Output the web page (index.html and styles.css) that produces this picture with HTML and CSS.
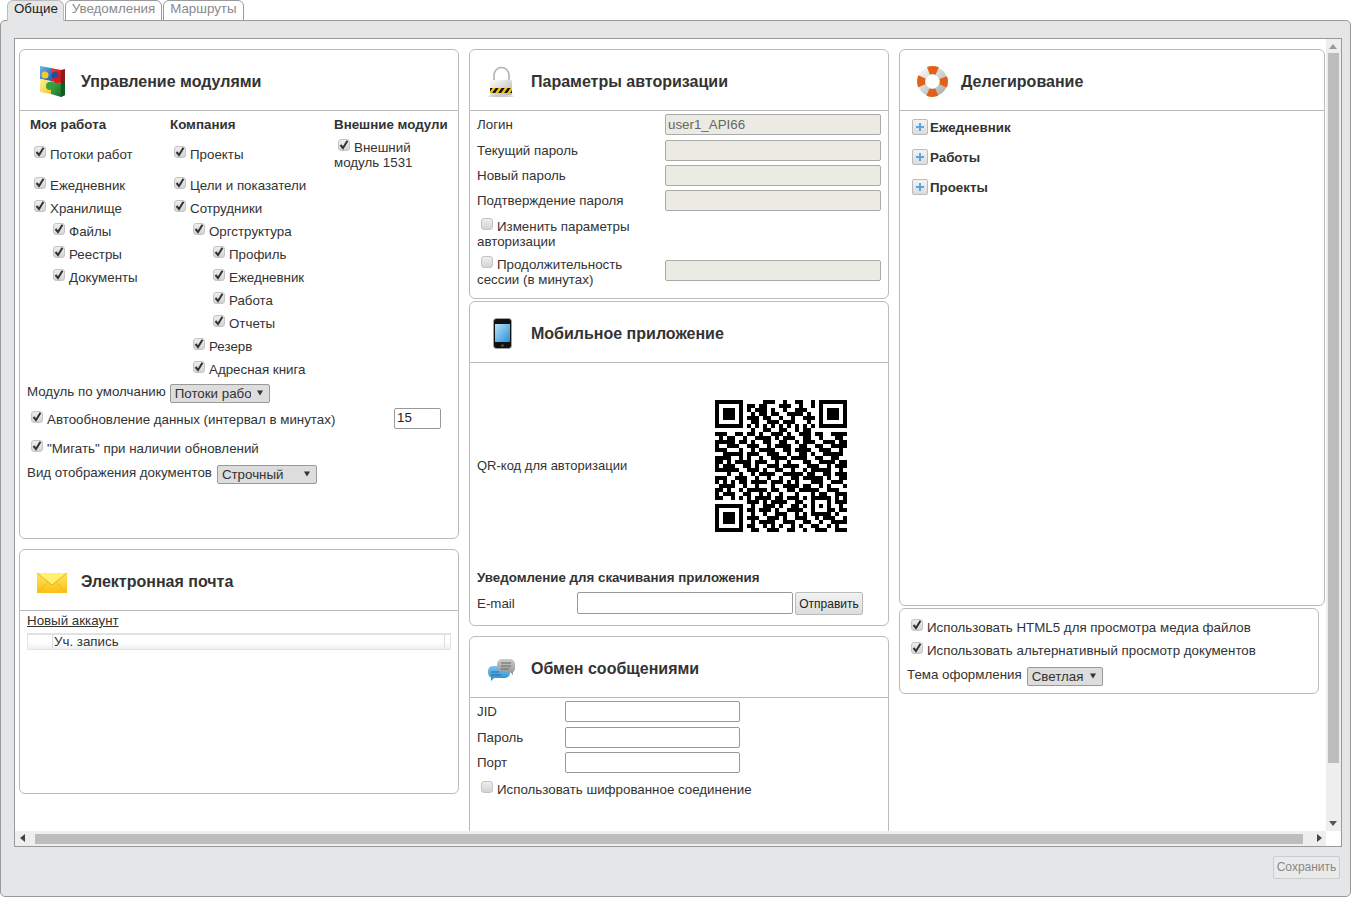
FILE: index.html
```html
<!DOCTYPE html>
<html lang="ru">
<head>
<meta charset="utf-8">
<title>Настройки</title>
<link rel="stylesheet" href="styles.css">
</head>
<body>
<div class="page">
  <nav class="tabs">
    <div class="tab active">Общие</div>
    <div class="tab">Уведомления</div>
    <div class="tab">Маршруты</div>
  </nav>
  <main class="panel">
    <div class="scrollbox">
      <div class="viewport">
        <div class="columns">
          <div class="col col-a">
            <section class="card card-modules">
              <header class="card-head">
                <svg class="ico" viewBox="0 0 32 32"><defs>
                  <linearGradient id="pb" x1="0" y1="0" x2="1" y2="1"><stop offset="0" stop-color="#6fb7e8"/><stop offset="1" stop-color="#1f5fb0"/></linearGradient>
                  <linearGradient id="py" x1="0" y1="0" x2="1" y2="1"><stop offset="0" stop-color="#fff3a0"/><stop offset="1" stop-color="#f0c52a"/></linearGradient>
                  <linearGradient id="pg" x1="0" y1="0" x2="1" y2="1"><stop offset="0" stop-color="#4cae4c"/><stop offset="1" stop-color="#17702a"/></linearGradient>
                  <linearGradient id="pr" x1="0" y1="0" x2="1" y2="1"><stop offset="0" stop-color="#f03a3a"/><stop offset="1" stop-color="#c40d12"/></linearGradient></defs>
                  <path d="M3 0 14 2V15L3 13Z" fill="url(#pb)"/><path d="M14 2 24 4V17L14 15Z" fill="url(#pr)"/><path d="M3 13 14 15V28L3 26Z" fill="url(#py)"/><path d="M14 15 24 17V31L14 28Z" fill="url(#pg)"/>
                  <path d="M24 4 28 3V29L24 31Z" fill="#8c1a1a"/><path d="M24 17 28 16V29L24 31Z" fill="#0f5a20"/>
                  <circle cx="8" cy="9" r="3.5" fill="#f6c92e"/><circle cx="18" cy="9.5" r="3.5" fill="#1d4fa5"/><circle cx="13" cy="20" r="4" fill="#37a03e"/><circle cx="20" cy="14" r="3" fill="#e3161b"/>
                </svg>
                <h2>Управление модулями</h2>
              </header>
              <div class="modules">
                <div class="mod-col">
                  <div class="mod-head">Моя работа</div>
                  <label class="row lead l0"><input type="checkbox" checked>Потоки работ</label>
                  <label class="row l0"><input type="checkbox" checked>Ежедневник</label>
                  <label class="row l0"><input type="checkbox" checked>Хранилище</label>
                  <label class="row l1"><input type="checkbox" checked>Файлы</label>
                  <label class="row l1"><input type="checkbox" checked>Реестры</label>
                  <label class="row l1"><input type="checkbox" checked>Документы</label>
                </div>
                <div class="mod-col">
                  <div class="mod-head">Компания</div>
                  <label class="row lead l0"><input type="checkbox" checked>Проекты</label>
                  <label class="row l0"><input type="checkbox" checked>Цели и показатели</label>
                  <label class="row l0"><input type="checkbox" checked>Сотрудники</label>
                  <label class="row l1"><input type="checkbox" checked>Оргструктура</label>
                  <label class="row l2"><input type="checkbox" checked>Профиль</label>
                  <label class="row l2"><input type="checkbox" checked>Ежедневник</label>
                  <label class="row l2"><input type="checkbox" checked>Работа</label>
                  <label class="row l2"><input type="checkbox" checked>Отчеты</label>
                  <label class="row l1"><input type="checkbox" checked>Резерв</label>
                  <label class="row l1"><input type="checkbox" checked>Адресная книга</label>
                </div>
                <div class="mod-col">
                  <div class="mod-head">Внешние модули</div>
                  <label class="wrapped ext"><input type="checkbox" checked>Внешний модуль 1531</label>
                </div>
              </div>
              <div class="opts">
                <div class="opt opt-default"><span>Модуль по умолчанию</span><select class="sel sel-module"><option>Потоки работ</option></select></div>
                <div class="opt opt-auto">
                  <label class="row"><input type="checkbox" checked>Автообновление данных (интервал в минутах)</label>
                  <input class="num" type="text" value="15">
                </div>
                <div class="opt opt-blink"><label class="row"><input type="checkbox" checked>"Мигать" при наличии обновлений</label></div>
                <div class="opt opt-view"><span>Вид отображения документов</span><select class="sel sel-view"><option>Строчный</option></select></div>
              </div>
            </section>
            <section class="card card-mail">
              <header class="card-head">
                <svg class="ico" viewBox="0 0 32 32"><defs>
                  <linearGradient id="ev" x1="0" y1="0" x2="0" y2="1"><stop offset="0" stop-color="#ffe65c"/><stop offset="1" stop-color="#fbbf14"/></linearGradient></defs>
                  <rect x="0" y="7" width="30" height="20" fill="url(#ev)"/>
                  <path d="M0 7 15 19 30 7" fill="#fff06e" stroke="#d9a514" stroke-width=".8"/>
                  <path d="M0 27 11 16M30 27 19 16" stroke="#eab21a" stroke-width=".7" fill="none"/>
                </svg>
                <h2>Электронная почта</h2>
              </header>
              <div class="mail-body">
                <a class="link">Новый аккаунт</a>
                <div class="grid-head">
                  <div class="gh-first"></div>
                  <div class="gh-main">Уч. запись</div>
                  <div class="gh-last"></div>
                </div>
              </div>
            </section>
          </div>
          <div class="col col-b">
            <section class="card card-auth">
              <header class="card-head">
                <svg class="ico" viewBox="0 0 32 32"><defs>
                  <linearGradient id="lk" x1="0" y1="0" x2="1" y2="1"><stop offset="0" stop-color="#fff"/><stop offset="1" stop-color="#b4b4b4"/></linearGradient>
                  <pattern id="hz" width="6" height="6" patternUnits="userSpaceOnUse" patternTransform="skewX(-35)"><rect width="6" height="6" fill="#f2c400"/><rect width="3" height="6" fill="#111"/></pattern></defs>
                  <path d="M7 15V9a7.5 7.500 0 0 1 15 0v6" fill="none" stroke="#aeb2b5" stroke-width="1.6"/>
                  <rect x="3" y="14" width="22" height="15" rx="1.5" fill="url(#lk)"/>
                  <rect x="3" y="22" width="22" height="5" fill="url(#hz)"/>
                  <ellipse cx="14" cy="30" rx="13" ry="1.2" fill="#ccc"/>
                </svg>
                <h2>Параметры авторизации</h2>
              </header>
              <div class="form-auth">
                <div class="f-row r1"><label>Логин</label><input class="dis" type="text" value="user1_API66" disabled></div>
                <div class="f-row"><label>Текущий пароль</label><input class="dis" type="text" disabled></div>
                <div class="f-row"><label>Новый пароль</label><input class="dis" type="text" disabled></div>
                <div class="f-row"><label>Подтверждение пароля</label><input class="dis" type="text" disabled></div>
                <div class="f-row two-a"><label class="wrapped"><input type="checkbox" disabled>Изменить параметры авторизации</label></div>
                <div class="f-row two-b"><label class="wrapped"><input type="checkbox" disabled>Продолжительность сессии (в минутах)</label><input class="dis" type="text" disabled></div>
              </div>
            </section>
            <section class="card card-mobile">
              <header class="card-head">
                <svg class="ico" viewBox="0 0 32 32"><defs>
                  <linearGradient id="ph" x1="0" y1="0" x2="1" y2="1"><stop offset="0" stop-color="#b8e2fa"/><stop offset="1" stop-color="#2a8fd6"/></linearGradient></defs>
                  <rect x="6.500" y=".5" width="18" height="30" rx="3" fill="#111" stroke="#aaa" stroke-width=".8"/>
                  <rect x="8" y="6" width="15" height="18" fill="url(#ph)"/>
                  <circle cx="15.500" cy="27.500" r="1.300" fill="#555"/>
                </svg>
                <h2>Мобильное приложение</h2>
              </header>
              <div class="qr-row">
                <span class="qr-label">QR-код для авторизации</span>
                <svg class="qr" viewBox="0 0 33 33" shape-rendering="crispEdges"><path fill="none" stroke="#000" stroke-width="1" d="M0 .5h7M12 .5h3M17 .5h1M20 .5h2M24 .5h1M26 .5h7M0 1.5h1M6 1.5h1M8 1.5h2M11 1.5h2M16 1.5h3M21 1.5h1M24 1.5h1M26 1.5h1M32 1.5h1M0 2.5h1M2 2.5h3M6 2.5h1M8 2.5h1M10 2.5h3M14 2.5h1M17 2.5h1M20 2.5h3M26 2.5h1M28 2.5h3M32 2.5h1M0 3.5h1M2 3.5h3M6 3.5h1M9 3.5h1M11 3.5h2M14 3.5h2M18 3.5h4M23 3.5h1M26 3.5h1M28 3.5h3M32 3.5h1M0 4.5h1M2 4.5h3M6 4.5h1M8 4.5h3M12 4.5h2M16 4.5h1M19 4.5h1M22 4.5h3M26 4.5h1M28 4.5h3M32 4.5h1M0 5.5h1M6 5.5h1M9 5.5h2M13 5.5h3M17 5.5h3M23 5.5h1M26 5.5h1M32 5.5h1M0 6.5h7M8 6.5h1M10 6.5h1M12 6.5h1M14 6.5h1M16 6.5h1M18 6.5h1M20 6.5h1M22 6.5h1M24 6.5h1M26 6.5h7M9 7.5h1M12 7.5h2M16 7.5h2M20 7.5h1M22 7.5h2M0 8.5h3M5 8.5h2M8 8.5h2M11 8.5h1M14 8.5h3M18 8.5h1M21 8.5h3M25 8.5h2M29 8.5h4M1 9.5h1M3 9.5h2M7 9.5h1M10 9.5h4M15 9.5h1M17 9.5h3M22 9.5h2M26 9.5h1M30 9.5h2M0 10.5h5M6 10.5h2M9 10.5h1M12 10.5h2M16 10.5h2M20 10.5h1M22 10.5h3M27 10.5h3M31 10.5h2M0 11.5h1M3 11.5h3M8 11.5h3M13 11.5h1M15 11.5h4M21 11.5h2M25 11.5h2M29 11.5h4M0 12.5h3M6 12.5h1M9 12.5h1M11 12.5h4M17 12.5h2M20 12.5h4M26 12.5h3M31 12.5h1M2 13.5h5M8 13.5h3M13 13.5h3M18 13.5h1M21 13.5h2M24 13.5h1M27 13.5h5M0 14.5h4M6 14.5h1M8 14.5h1M11 14.5h1M14 14.5h4M19 14.5h4M25 14.5h2M29 14.5h2M0 15.5h2M3 15.5h1M5 15.5h4M10 15.5h3M15 15.5h1M18 15.5h1M22 15.5h2M26 15.5h4M31 15.5h2M0 16.5h1M2 16.5h3M7 16.5h2M10 16.5h1M13 16.5h3M17 16.5h4M23 16.5h3M28 16.5h1M30 16.5h3M0 17.5h6M8 17.5h3M12 17.5h1M15 17.5h2M19 17.5h1M22 17.5h1M24 17.5h5M31 17.5h1M3 18.5h1M6 18.5h1M9 18.5h1M11 18.5h4M17 18.5h5M23 18.5h2M27 18.5h2M30 18.5h3M0 19.5h3M5 19.5h3M10 19.5h1M13 19.5h1M16 19.5h1M19 19.5h2M22 19.5h5M28 19.5h1M31 19.5h2M0 20.5h1M2 20.5h1M4 20.5h1M6 20.5h2M9 20.5h4M14 20.5h3M18 20.5h1M20 20.5h1M24 20.5h3M29 20.5h3M1 21.5h4M7 21.5h1M10 21.5h1M14 21.5h1M17 21.5h4M22 21.5h2M26 21.5h1M28 21.5h1M32 21.5h1M0 22.5h2M3 22.5h1M6 22.5h1M8 22.5h5M14 22.5h2M18 22.5h2M21 22.5h5M28 22.5h3M0 23.5h1M2 23.5h3M7 23.5h2M11 23.5h1M13 23.5h1M16 23.5h1M20 23.5h1M24 23.5h1M26 23.5h2M30 23.5h3M0 24.5h2M4 24.5h1M6 24.5h1M8 24.5h1M10 24.5h4M15 24.5h2M18 24.5h3M22 24.5h1M24 24.5h5M30 24.5h1M32 24.5h1M8 25.5h3M12 25.5h1M14 25.5h4M20 25.5h2M24 25.5h1M28 25.5h1M30 25.5h3M0 26.5h7M9 26.5h1M12 26.5h3M16 26.5h1M19 26.5h2M22 26.5h1M24 26.5h1M26 26.5h1M28 26.5h1M31 26.5h1M0 27.5h1M6 27.5h1M8 27.5h2M11 27.5h3M15 27.5h1M18 27.5h4M24 27.5h1M28 27.5h2M31 27.5h2M0 28.5h1M2 28.5h3M6 28.5h1M9 28.5h1M12 28.5h1M15 28.5h3M20 28.5h1M22 28.5h1M24 28.5h5M30 28.5h1M0 29.5h1M2 29.5h3M6 29.5h1M8 29.5h3M13 29.5h3M17 29.5h1M20 29.5h3M25 29.5h1M27 29.5h3M32 29.5h1M0 30.5h1M2 30.5h3M6 30.5h1M9 30.5h1M11 30.5h4M17 30.5h3M22 30.5h2M26 30.5h1M29 30.5h4M0 31.5h1M6 31.5h1M8 31.5h2M12 31.5h1M14 31.5h1M16 31.5h1M19 31.5h1M21 31.5h1M24 31.5h2M28 31.5h1M30 31.5h1M0 32.5h7M9 32.5h2M13 32.5h3M18 32.5h2M22 32.5h1M25 32.5h3M30 32.5h3"/></svg>
              </div>
              <div class="notice">Уведомление для скачивания приложения</div>
              <div class="send-row">
                <label>E-mail</label>
                <input class="txt mail-input" type="text">
                <button class="btn" type="button">Отправить</button>
              </div>
            </section>
            <section class="card card-chat">
              <header class="card-head">
                <svg class="ico" viewBox="0 0 32 32"><defs>
                  <linearGradient id="cb" x1="0" y1="0" x2="0" y2="1"><stop offset="0" stop-color="#7cc6ee"/><stop offset="1" stop-color="#2a87c8"/></linearGradient>
                  <linearGradient id="cg" x1="0" y1="0" x2="0" y2="1"><stop offset="0" stop-color="#ccc"/><stop offset="1" stop-color="#8f8f8f"/></linearGradient></defs>
                  <path d="M7 14h11a5 5 0 0 1 5 5v2a5 5 0 0 1-5 5H7l-3 3v-3.600a5 5 0 0 1-3-4.400v-2a5 5 0 0 1 6-5Z" transform="translate(0 -1)" fill="url(#cb)"/>
                  <path d="M15 6h8a5 5 0 0 1 5 5v4c0 2-1 3.500-2 4v3l-3-3h-8a5.500 5.500 0 0 1-5-6v-2a5 5 0 0 1 5-5Z" fill="url(#cg)"/>
                  <path d="M14 10h10M14 13h10M14 16h8" stroke="#666" stroke-width="1" fill="none"/>
                  <path d="M4 19h8M4 22h10" stroke="#1f6ea5" stroke-width="1" fill="none"/>
                </svg>
                <h2>Обмен сообщениями</h2>
              </header>
              <div class="form-chat">
                <div class="c-row"><label>JID</label><input class="txt" type="text"></div>
                <div class="c-row"><label>Пароль</label><input class="txt" type="text"></div>
                <div class="c-row"><label>Порт</label><input class="txt" type="text"></div>
                <label class="row enc"><input type="checkbox">Использовать шифрованное соединение</label>
              </div>
            </section>
          </div>
          <div class="col col-c">
            <section class="card card-deleg">
              <header class="card-head">
                <svg class="ico" viewBox="0 0 32 32"><defs>
                  <linearGradient id="lb" x1="0" y1="0" x2="1" y2="1"><stop offset="0" stop-color="#f5f5f5"/><stop offset="1" stop-color="#b0b0b0"/></linearGradient></defs>
                  <circle cx="15.500" cy="15.500" r="11" fill="none" stroke="url(#lb)" stroke-width="8"/>
                  <circle cx="15.500" cy="15.500" r="11.500" fill="none" stroke="#e2611a" stroke-width="8" stroke-dasharray="9 9.060" stroke-dashoffset="4.500"/>
                </svg>
                <h2>Делегирование</h2>
              </header>
              <div class="tree">
                <div class="node"><span class="plus"></span>Ежедневник</div>
                <div class="node"><span class="plus"></span>Работы</div>
                <div class="node"><span class="plus"></span>Проекты</div>
              </div>
            </section>
            <section class="card card-misc">
              <label class="row"><input type="checkbox" checked>Использовать HTML5 для просмотра медиа файлов</label>
              <label class="row"><input type="checkbox" checked>Использовать альтернативный просмотр документов</label>
              <div class="opt theme"><span>Тема оформления</span><select class="sel sel-theme"><option>Светлая</option></select></div>
            </section>
          </div>
        </div>
      </div>
      <div class="vbar"><i class="arr-up"></i><div class="vthumb"></div><i class="arr-down"></i></div>
      <div class="hbar"><i class="arr-left"></i><div class="hthumb"></div><i class="arr-right"></i></div>
      <div class="corner"></div>
    </div>
    <footer class="foot"><button class="save" type="button" disabled>Сохранить</button></footer>
  </main>
</div>
</body>
</html>
```
FILE: styles.css
```css
* { box-sizing: border-box; }
html, body { margin: 0; padding: 0; height: 100%; overflow: hidden; background: #fff; }
body, input, select, button { font-family: "Liberation Sans", Arial, sans-serif; font-size: 13.33px; color: #333; }
.page { height: 898px; display: flex; flex-direction: column; padding-bottom: 1px; padding-right: 1px; }

.tabs { display: flex; height: 20px; padding-left: 7px; gap: 1px; position: relative; z-index: 1; }
.tab { height: 21px; padding: 0 6px; line-height: 16px; border: 1px solid #999; border-radius: 6px 6px 0 0; color: #8a8a8a; background: #fff; }
.tab.active { color: #222; background: #e5e6e8; border-color: #bbb; border-bottom-color: #e5e6e8; padding-right: 5px; }

.panel { flex: 1; min-height: 0; display: flex; flex-direction: column; background: #e5e6e8; border: 1px solid #999; border-radius: 5px; padding: 17px 8px 0 13px; }
.scrollbox { height: 809px; display: grid; grid-template-columns: 1fr 15px; grid-template-rows: 1fr 15px; background: #fff; border: 1px solid #999; }
.viewport { overflow: hidden; padding: 10px 0 0 4px; min-width: 0; min-height: 0; }
.columns { display: flex; gap: 10px; }
.col { flex: none; display: flex; flex-direction: column; }
.col-a { width: 440px; }
.col-b { width: 420px; }
.col-c { width: 426px; }

.vbar { background: #eee; display: flex; flex-direction: column; align-items: flex-start; padding: 14px 0 0 2px; position: relative; }
.vthumb { width: 11px; height: 710px; background: #bdbdbd; }
.arr-up { position: absolute; left: 3px; top: 5px; border: 4px solid transparent; border-top: 0; border-bottom: 5px solid #999; }
.arr-down { position: absolute; left: 3px; bottom: 5px; border: 4px solid transparent; border-bottom: 0; border-top: 5px solid #555; }
.hbar { background: #eee; display: flex; align-items: center; padding: 0 0 0 20px; position: relative; }
.hthumb { width: 1268px; height: 10px; background: #bdbdbd; }
.arr-left { position: absolute; left: 5px; top: 3px; border: 4px solid transparent; border-left: 0; border-right: 5px solid #444; }
.arr-right { position: absolute; right: 4px; top: 3px; border: 4px solid transparent; border-right: 0; border-left: 5px solid #444; }
.corner { background: #fff; }

.foot { display: flex; justify-content: flex-end; padding: 9px 3px 0 0; margin-right: -1px; }
.save { width: 67px; height: 23px; padding: 0 0 2px; font-size: 12px; color: #888; background: #e9eaec; border: 1px solid #ccc; border-radius: 2px; }

.card { background: #fff; border: 1px solid #bbb; border-radius: 6px; flex: none; }
.card-head { height: 61px; display: flex; align-items: flex-start; padding: 16px 0 0 17px; gap: 12px; border-bottom: 1px solid #bbb; }
.ico { width: 32px; height: 32px; flex: none; overflow: visible; }
.card-head h2 { margin: 0; font-size: 16px; line-height: 18px; padding-top: 7px; font-weight: bold; color: #333; }

.card-modules { height: 490px; margin-bottom: 10px; }
.card-mail { height: 245px; }
.card-auth { height: 250px; margin-bottom: 2px; }
.card-mobile { height: 325px; margin-bottom: 10px; }
.card-chat { height: 300px; }
.card-deleg { width: 426px; height: 557px; margin-bottom: 2px; }
.card-misc { width: 420px; height: 86px; padding-top: 7px; padding-left: 7px; }

input[type="checkbox"] { appearance: none; -webkit-appearance: none; width: 12px; height: 12px; margin: 0 4px 0 0; border: 1px solid #c4c4c4; border-radius: 3px; background: linear-gradient(#eee, #d4d4d4); vertical-align: 1px; position: relative; flex: none; }
input[type="checkbox"]:checked { background: url("data:image/svg+xml,%3Csvg xmlns='http://www.w3.org/2000/svg' viewBox='0 0 12 12'%3E%3Cpath d='M2.500 6 5 9 9.500 1.800' fill='none' stroke='%23333' stroke-width='2'/%3E%3C/svg%3E") center/12px no-repeat, linear-gradient(#eee, #d4d4d4); }

.row { display: block; height: 23px; line-height: 23px; white-space: nowrap; }
.wrapped { display: block; line-height: 15px; }

.modules { display: grid; grid-template-columns: 140px 164px 1fr; padding-left: 10px; height: 270px; }
.mod-head { height: 24px; padding-top: 6px; line-height: 16px; font-weight: bold; white-space: nowrap; }
.row.lead { height: 39px; line-height: 39px; }
.l0 { padding-left: 4px; }
.l1 { padding-left: 23px; }
.l2 { padding-left: 43px; }
.ext { padding-top: 4px; width: 104px; }
.ext input { margin-left: 4px; margin-right: 4px; }

.opts { padding-left: 7px; }
.opt { display: flex; align-items: center; }
.opt > span { margin-right: 4px; position: relative; top: -2px; }
.opt-view > span, .theme > span { margin-right: 5px; }
.opt-default { height: 24px; }
.opt-auto { height: 28px; padding-left: 4px; justify-content: space-between; padding-right: 17px; }
.opt-blink { height: 30px; padding-left: 4px; }
.opt-view { height: 22px; }
.sel { appearance: none; -webkit-appearance: none; height: 19px; padding: 1px 18px 0 4px; border: 1px solid #999; border-radius: 2px; color: #333; background: url("data:image/svg+xml,%3Csvg xmlns='http://www.w3.org/2000/svg' viewBox='0 0 7 6'%3E%3Cpath d='M0 0h7L3.500 6Z' fill='%23333'/%3E%3C/svg%3E") no-repeat right 6px top 5px / 6px 6px, #ddd; }
.sel-module, .sel-view { width: 100px; }
.sel-theme { width: 76px; }
.num { width: 47px; height: 21px; margin-top: -1px; padding: 0 2px 2px; border: 1px solid #999; border-radius: 2px; background: #fff; color: #222; }

.mail-body { padding: 1px 7px 0; }
.link { display: block; height: 21px; line-height: 17px; text-decoration: underline; }
.grid-head { display: flex; width: 424px; height: 17px; border-top: 2px solid #e2e2e2; border-bottom: 1px solid #e4e4e4; background: linear-gradient(#fff 50%, #efefef); }
.grid-head > div { line-height: 13px; }
.gh-first { width: 26px; border-right: 1px solid #ddd; border-left: 1px solid #e4e4e4; }
.gh-main { flex: 1; padding-left: 1px; }
.gh-last { width: 7px; border-left: 1px solid #ddd; border-right: 1px solid #e4e4e4; }

.form-auth { padding: 0 7px; }
.f-row { display: flex; align-items: center; height: 25px; }
.f-row.r1 { height: 27px; padding-bottom: 1px; }
.f-row.two-a { height: 41px; }
.f-row.two-b { height: 35px; }
.f-row > label { width: 188px; flex: none; }
.f-row > label.wrapped { padding-right: 12px; }
.two-b .dis { margin-top: -3px; }
.dis { width: 216px; height: 21px; padding: 0 2px; border: 1px solid #aaa; border-radius: 2px; background: #ebebe4; color: #666; }
.f-row > label input { margin-left: 4px; margin-right: 4px; }

.qr-row { display: flex; align-items: center; padding: 37px 0 0 7px; height: 169px; }
.qr-label { width: 238px; flex: none; margin-bottom: 2px; font-size: 13px; }
.qr { width: 132px; height: 132px; flex: none; display: block; }
.notice { padding: 38px 0 0 7px; line-height: 15px; font-weight: bold; }
.send-row { display: flex; align-items: flex-start; padding: 7px 0 0 7px; }
.send-row label { width: 100px; flex: none; line-height: 23px; }
.txt { height: 21px; padding: 0 2px; border: 1px solid #999; border-radius: 2px; background: #fff; }
.mail-input { width: 216px; height: 22px; }
.btn { width: 68px; height: 23px; margin-left: 2px; padding: 0; font-size: 12px; color: #222; background: linear-gradient(#f2f2f2, #ddd); border: 1px solid #bbb; border-radius: 2px; }

.form-chat { padding: 1px 7px 0; }
.c-row { display: flex; align-items: center; height: 25.5px; }
.c-row label { width: 88px; flex: none; }
.c-row .txt { width: 175px; }
.enc { padding-left: 4px; margin-top: 2px; }

.tree { padding: 1px 0 0 12px; }
.node { display: flex; align-items: center; height: 30px; font-weight: bold; }
.plus { width: 16px; height: 16px; margin-right: 2px; border: 1px solid #bbb; border-radius: 2px; background: linear-gradient(#5aa7e0, #5aa7e0) center/8px 2px no-repeat, linear-gradient(#5aa7e0, #5aa7e0) center/2px 8px no-repeat, linear-gradient(#f4f4f4, #dcdcdc); }

.theme { height: 24px; margin-top: 2px; }
.card-misc .row input { margin-left: 4px; }
```
